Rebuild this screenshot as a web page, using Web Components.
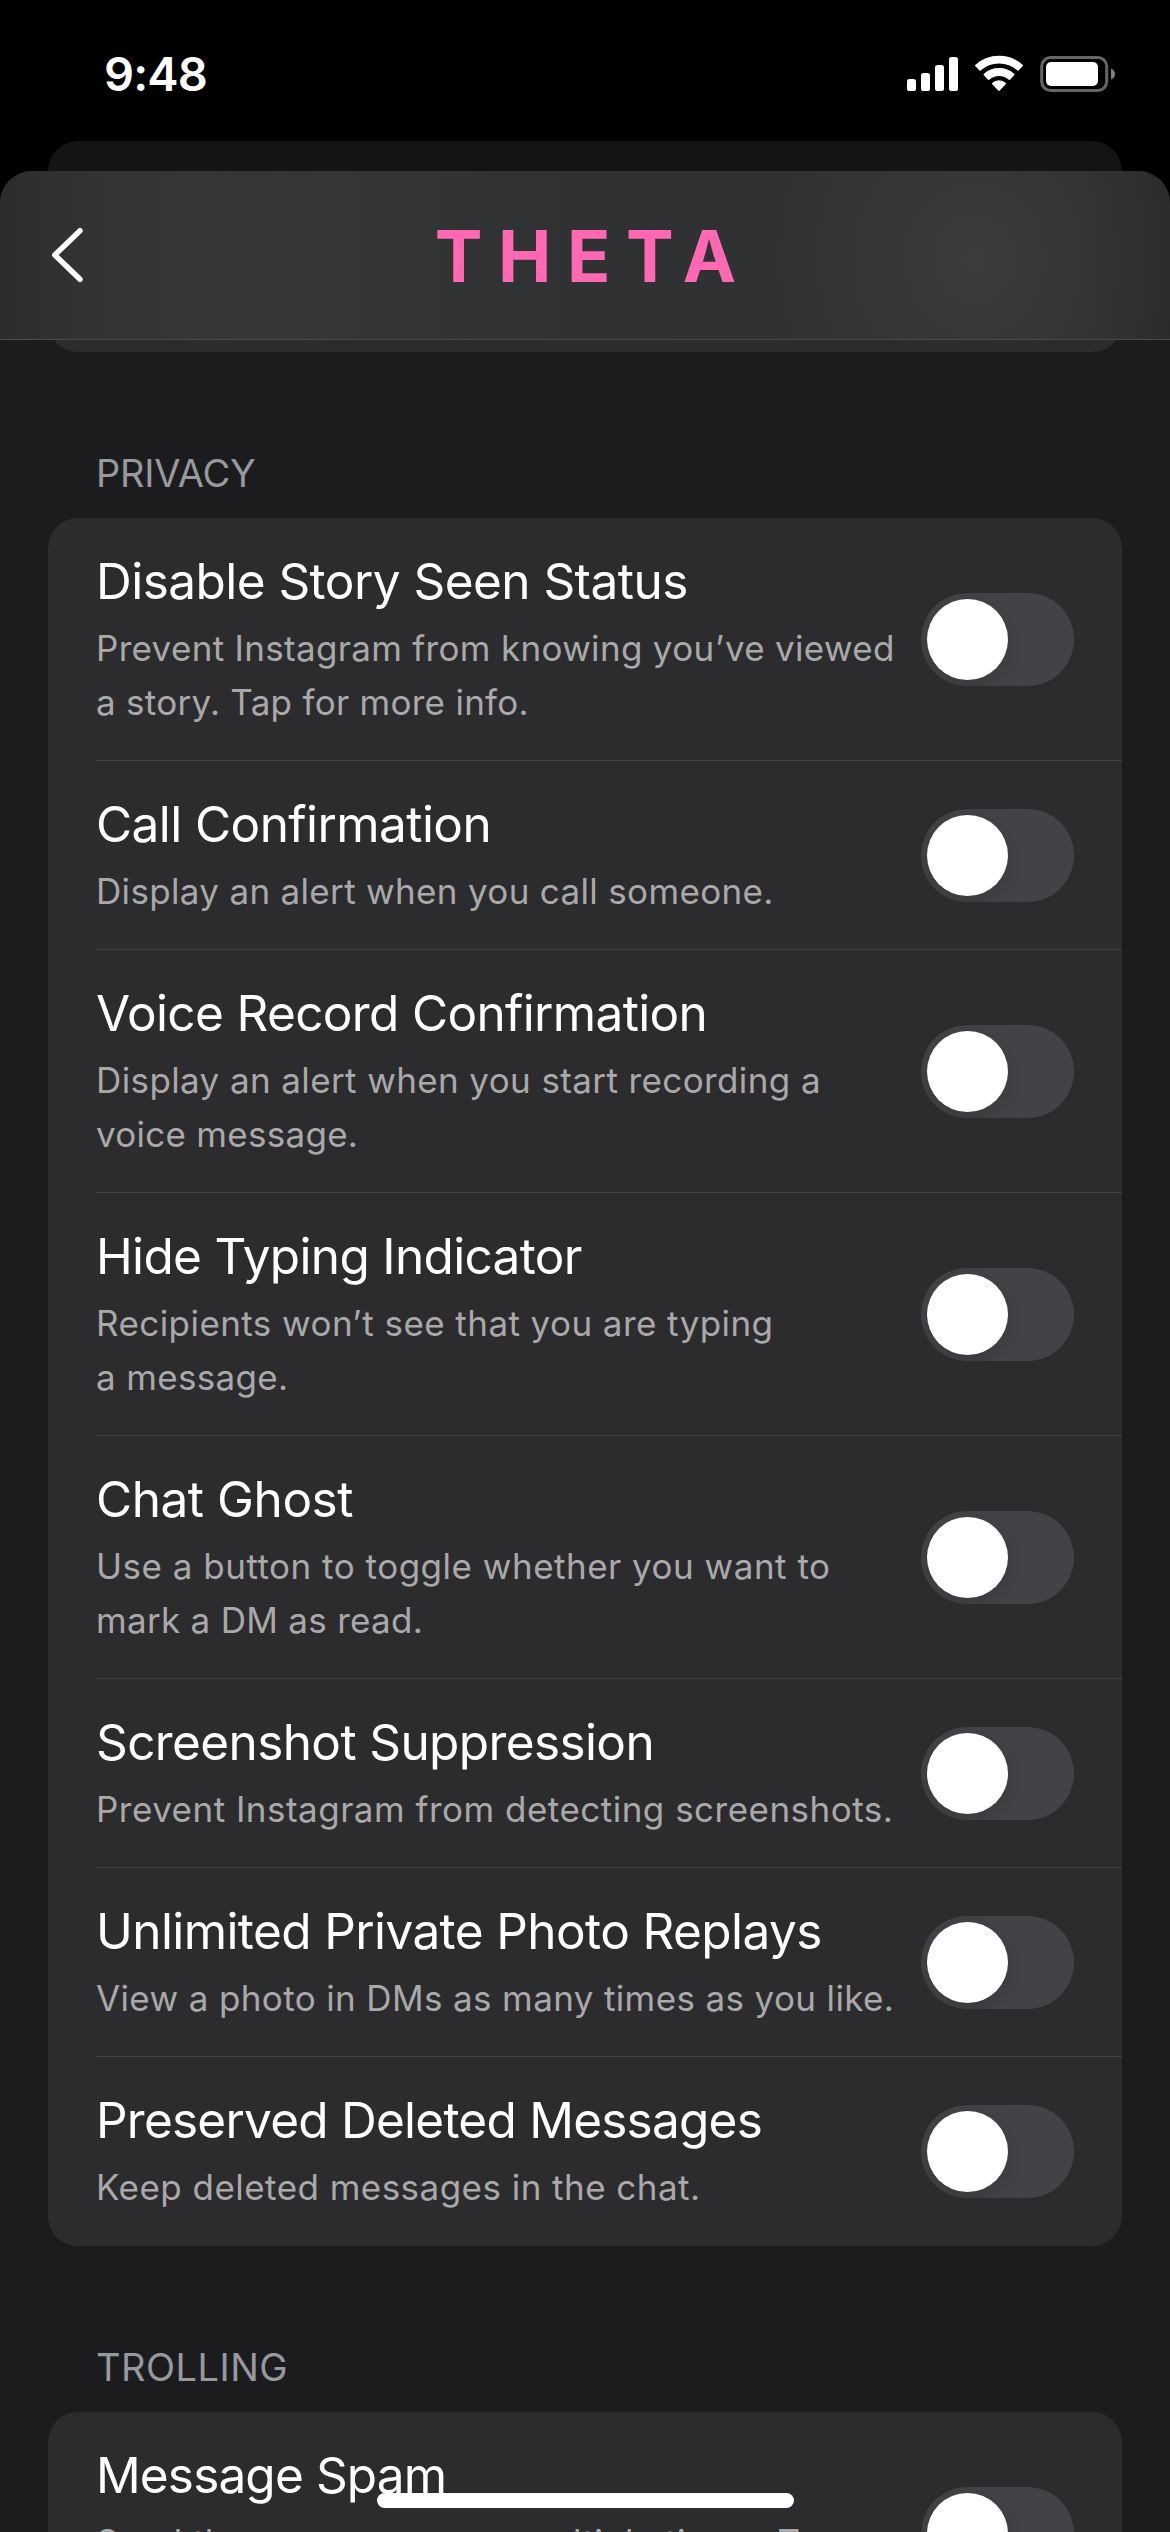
<!DOCTYPE html>
<html lang="en">
<head>
<meta charset="utf-8">
<title>Theta</title>
<style>
html,body{margin:0;background:#000}
body{width:1170px;height:2532px;overflow:hidden;font-family:Inter,"Liberation Sans",sans-serif;color:#fff;position:relative}
</style>
</head>
<body>
<app-screen>
  <status-bar slot="status">9:48</status-bar>
  <nav-bar slot="nav">THETA</nav-bar>
  <card-tail></card-tail>
  <settings-group>
    <section-title slot="title" style="--ls:-.2px">PRIVACY</section-title>
    <setting-row><text-line slot="heading" style="--ls:-.54px">Disable Story Seen Status</text-line>
      <text-line style="--ls:.316px">Prevent Instagram from knowing you’ve viewed</text-line><text-line style="--ls:.28px">a story. Tap for more info.</text-line></setting-row>
    <setting-row><text-line slot="heading" style="--ls:-.58px">Call Confirmation</text-line>
      <text-line style="--ls:.33px">Display an alert when you call someone.</text-line></setting-row>
    <setting-row><text-line slot="heading" style="--ls:-.65px">Voice Record Confirmation</text-line>
      <text-line style="--ls:.39px">Display an alert when you start recording a</text-line><text-line style="--ls:.28px">voice message.</text-line></setting-row>
    <setting-row><text-line slot="heading" style="--ls:-.67px">Hide Typing Indicator</text-line>
      <text-line style="--ls:.43px">Recipients won’t see that you are typing</text-line><text-line style="--ls:.33px">a message.</text-line></setting-row>
    <setting-row><text-line slot="heading" style="--ls:-.45px">Chat Ghost</text-line>
      <text-line style="--ls:.5px">Use a button to toggle whether you want to</text-line><text-line style="--ls:.3px">mark a DM as read.</text-line></setting-row>
    <setting-row><text-line slot="heading" style="--ls:-.61px">Screenshot Suppression</text-line>
      <text-line style="--ls:.49px">Prevent Instagram from detecting screenshots.</text-line></setting-row>
    <setting-row><text-line slot="heading" style="--ls:-.6px">Unlimited Private Photo Replays</text-line>
      <text-line style="--ls:.37px">View a photo in DMs as many times as you like.</text-line></setting-row>
    <setting-row last><text-line slot="heading" style="--ls:-.76px">Preserved Deleted Messages</text-line>
      <text-line style="--ls:.46px">Keep deleted messages in the chat.</text-line></setting-row>
  </settings-group>
  <settings-group>
    <section-title slot="title" style="--ls:.5px">TROLLING</section-title>
    <setting-row last><text-line slot="heading" style="--ls:-.85px">Message Spam</text-line>
      <text-line style="--ls:.42px">Send the same message multiple times. T</text-line><text-line>&nbsp;</text-line></setting-row>
  </settings-group>
  <home-indicator slot="home"></home-indicator>
</app-screen>
<script>
const define = (name, html) => customElements.define(name, class extends HTMLElement {
  constructor() {
    super();
    const t = document.createElement('template');
    t.innerHTML = html;
    this.attachShadow({ mode: 'open' }).append(t.content.cloneNode(true));
  }
});

define('app-screen', `<style>
:host{display:flex;flex-direction:column;width:1170px;height:2532px;overflow:hidden;background:#000;position:relative}
.back{flex:none;height:30px;margin:0 48px;border-radius:30px 30px 0 0;background:#141414}
.sheet{flex:1;min-height:0;display:flex;flex-direction:column;overflow:hidden;border-radius:32px 32px 0 0;background:#1c1c1e}
.scroll{display:flex;flex-direction:column;flex:none;padding:0 48px}
</style>
<slot name="status"></slot>
<div class="back"></div>
<div class="sheet"><slot name="nav"></slot><div class="scroll"><slot></slot></div></div>
<slot name="home"></slot>`);

define('status-bar', `<style>
:host{display:flex;flex:none;box-sizing:border-box;height:141px;padding:45px 54px 0 104px;justify-content:space-between;align-items:flex-start;font-weight:600;font-size:47px;line-height:58px;letter-spacing:-.9px}
svg{display:block}
</style>
<span><slot></slot></span>
<svg width="210" height="58" viewBox="906 45 210 58">
<g fill="#fff">
<rect x="907" y="79" width="9" height="12" rx="2.6"/><rect x="921" y="73" width="9" height="18" rx="2.6"/>
<rect x="935" y="65" width="9" height="26" rx="2.6"/><rect x="949" y="57" width="9" height="34" rx="2.6"/>
<g stroke="#fff" stroke-width="1.4" stroke-linejoin="round">
<path d="M975.7 65.4A35 35 0 0 1 1022.3 65.4L1018 69.9A28.8 28.8 0 0 0 980 69.9Z"/>
<path d="M984.2 74.6A21.8 21.8 0 0 1 1013.8 74.6L1009.4 79.2A15.6 15.6 0 0 0 988.6 79.2Z"/>
<path d="M992.6 83.4A9.4 9.4 0 0 1 1005.4 83.4L999 90.2Z"/></g>
<rect x="1046" y="62" width="52" height="24" rx="5"/></g>
<rect x="1041.7" y="57.5" width="65" height="33" rx="9" fill="none" stroke="#666" stroke-width="3"/>
<path d="M1111 68.5Q1115 70.5 1115 74T1111 79.5Z" fill="#808080"/>
</svg>`);

define('nav-bar', `<style>
:host{display:grid;flex:none;grid-template-columns:200px 1fr 200px;align-items:center;box-sizing:border-box;height:169px;border-bottom:1px solid #4a4a4b;
background:radial-gradient(ellipse 210px 230px at 975px 88px,#3c3c3c 0,#3a3a3a99 45%,#3a3a3a00 100%),linear-gradient(90deg,#2c2c2c 0,#323333 90px,#353636 190px,#373737 280px,#353535 370px,#313233 500px,#303132 700px,#313131 830px,#313131 1040px,#2b2b2c 1170px)}
h1{margin:0;padding:2px 0 0 16.5px;font-size:71.5px;line-height:86px;font-weight:700;letter-spacing:15.5px;color:#ff69b4;text-align:center;white-space:nowrap}
svg{display:block;margin-left:48px}
</style>
<svg width="40" height="60" viewBox="48 225 40 60"><path d="M80 230.7 54.8 255 80 279.3" fill="none" stroke="#fff" stroke-width="5.4" stroke-linecap="round" stroke-linejoin="round"/></svg>
<h1><slot></slot></h1>`);

define('card-tail', `<style>
:host{display:flex;align-items:flex-end;height:12px;overflow:hidden}
div{flex:1;height:80px;border-radius:30px;background:#2c2c2e}
</style><div></div>`);

define('section-title', `<style>
:host{display:block;padding:98px 48px 22px;font-size:38px;line-height:46px;letter-spacing:var(--ls);color:#98989f}
</style><slot></slot>`);

define('settings-group', `<style>
:host{display:flex;flex-direction:column}
.card{display:flex;flex-direction:column;border-radius:30px;overflow:hidden;background:#2c2c2e}
</style><slot name="title"></slot><div class="card"><slot></slot></div>`);

define('text-line', `<style>:host{display:block;white-space:nowrap;letter-spacing:var(--ls,0)}</style><slot></slot>`);

define('toggle-switch', `<style>
:host{display:flex;flex:none;box-sizing:border-box;width:153px;height:93px;padding:6px;border-radius:46.5px;background:#434246;overflow:hidden}
i{width:81px;height:81px;border-radius:50%;background:#fff;box-shadow:0 6px 18px #00000026}
</style><i></i>`);

define('setting-row', `<style>
:host{display:flex;align-items:center;justify-content:space-between;padding:33px 48px 32px;background:linear-gradient(#434345,#434345) 48px 100%/100% 1px no-repeat}
:host([last]){background:none}
.text{display:flex;flex-direction:column;gap:10px;width:800px}
.h{font-size:49.5px;line-height:60px}
.d{font-size:35px;line-height:54px;color:#a9a9aa}
toggle-switch{margin:-21px 0 -20px}
</style><div class="text"><div class="h"><slot name="heading"></slot></div><div class="d"><slot></slot></div></div><toggle-switch></toggle-switch>`);

define('home-indicator', `<style>
:host{position:absolute;left:377px;bottom:24px;width:417px;height:15px;border-radius:8px;background:#fff}
</style>`);
</script>
</body>
</html>
